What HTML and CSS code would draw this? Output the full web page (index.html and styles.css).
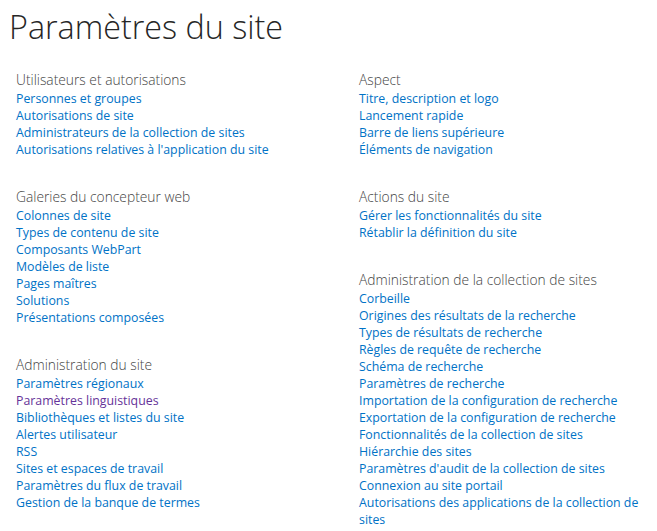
FILE: index.html
```html
<!DOCTYPE html>
<html lang="fr">
<head>
<meta charset="utf-8">
<title>Paramètres du site</title>
<link rel="stylesheet" href="styles.css">
</head>
<body>
<h1 class="title">Paramètres du site</h1>
<div class="columns">
  <div class="col">
    <section class="group">
      <h2 class="group-title">Utilisateurs et autorisations</h2>
      <ul class="links">
        <li><a href="#">Personnes et groupes</a></li>
        <li><a href="#">Autorisations de site</a></li>
        <li><a href="#">Administrateurs de la collection de sites</a></li>
        <li><a href="#">Autorisations relatives à l'application du site</a></li>
      </ul>
    </section>
    <section class="group">
      <h2 class="group-title">Galeries du concepteur web</h2>
      <ul class="links">
        <li><a href="#">Colonnes de site</a></li>
        <li><a href="#">Types de contenu de site</a></li>
        <li><a href="#">Composants WebPart</a></li>
        <li><a href="#">Modèles de liste</a></li>
        <li><a href="#">Pages maîtres</a></li>
        <li><a href="#">Solutions</a></li>
        <li><a href="#">Présentations composées</a></li>
      </ul>
    </section>
    <section class="group">
      <h2 class="group-title">Administration du site</h2>
      <ul class="links">
        <li><a href="#">Paramètres régionaux</a></li>
        <li><a href="#" class="visited">Paramètres linguistiques</a></li>
        <li><a href="#">Bibliothèques et listes du site</a></li>
        <li><a href="#">Alertes utilisateur</a></li>
        <li><a href="#">RSS</a></li>
        <li><a href="#">Sites et espaces de travail</a></li>
        <li><a href="#">Paramètres du flux de travail</a></li>
        <li><a href="#">Gestion de la banque de termes</a></li>
      </ul>
    </section>
  </div>
  <div class="col">
    <section class="group">
      <h2 class="group-title">Aspect</h2>
      <ul class="links">
        <li><a href="#">Titre, description et logo</a></li>
        <li><a href="#">Lancement rapide</a></li>
        <li><a href="#">Barre de liens supérieure</a></li>
        <li><a href="#">Éléments de navigation</a></li>
      </ul>
    </section>
    <section class="group">
      <h2 class="group-title">Actions du site</h2>
      <ul class="links">
        <li><a href="#">Gérer les fonctionnalités du site</a></li>
        <li><a href="#">Rétablir la définition du site</a></li>
      </ul>
    </section>
    <section class="group">
      <h2 class="group-title">Administration de la collection de sites</h2>
      <ul class="links">
        <li><a href="#">Corbeille</a></li>
        <li><a href="#">Origines des résultats de la recherche</a></li>
        <li><a href="#">Types de résultats de recherche</a></li>
        <li><a href="#">Règles de requête de recherche</a></li>
        <li><a href="#">Schéma de recherche</a></li>
        <li><a href="#">Paramètres de recherche</a></li>
        <li><a href="#">Importation de la configuration de recherche</a></li>
        <li><a href="#">Exportation de la configuration de recherche</a></li>
        <li><a href="#">Fonctionnalités de la collection de sites</a></li>
        <li><a href="#">Hiérarchie des sites</a></li>
        <li><a href="#">Paramètres d'audit de la collection de sites</a></li>
        <li><a href="#">Connexion au site portail</a></li>
        <li><a href="#">Autorisations des applications de la collection de sites</a></li>
      </ul>
    </section>
  </div>
</div>
</body>
</html>
```
FILE: styles.css
```css
html, body {
  margin: 0;
  padding: 0;
  background: #ffffff;
}
body {
  font-family: "Open Sans", "Noto Sans", "Liberation Sans", sans-serif;
  color: #444444;
}
.title {
  margin: 0;
  padding: 4px 0 0 9px;
  font-size: 32.3px;
  line-height: 44px;
  font-weight: 300;
  color: #262626;
}
.columns {
  display: grid;
  grid-template-columns: 343px 291px;
  padding: 22px 0 0 16px;
}
.group {
  margin-bottom: 29px;
}
.group-title {
  margin: 0;
  font-size: 13.8px;
  line-height: 20px;
  font-weight: 300;
  color: #444444;
}
.links {
  list-style: none;
  margin: 0;
  padding: 0;
}
.links li {
  font-size: 12.35px;
  line-height: 17px;
}
.links a {
  color: #0072c6;
  text-decoration: none;
}
.links a.visited {
  color: #663399;
}
```
